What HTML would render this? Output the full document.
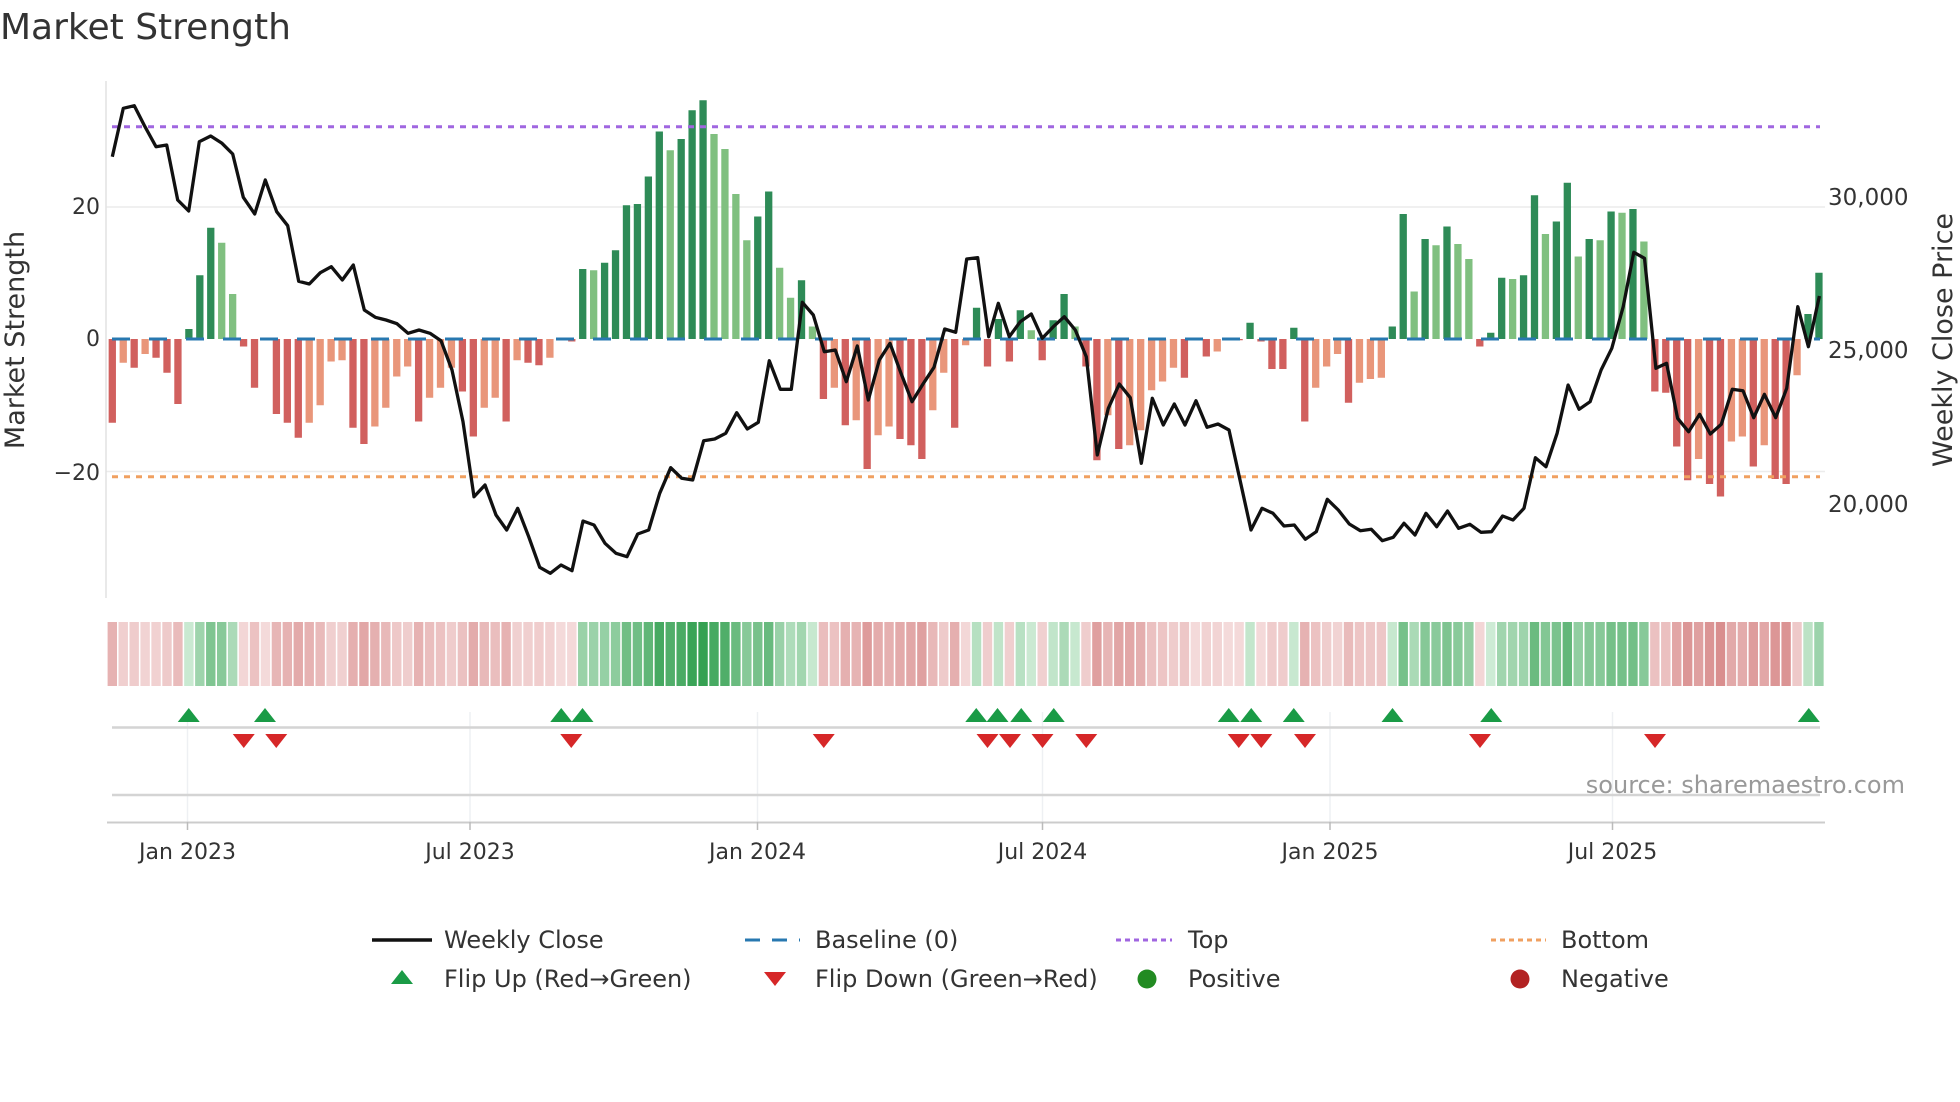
<!DOCTYPE html>
<html><head><meta charset="utf-8"><style>
html,body{margin:0;padding:0;background:#fff;}
svg{display:block;font-family:"DejaVu Sans","Liberation Sans",sans-serif;}
</style></head><body>
<svg id="s" width="1960" height="1102" viewBox="0 0 1960 1102" xmlns="http://www.w3.org/2000/svg">
<rect width="1960" height="1102" fill="#fff"/>
<text x="0" y="39" font-size="36" fill="#333">Market Strength</text>
<line x1="106" y1="207" x2="1825" y2="207" stroke="#ececec" stroke-width="1.5"/>
<line x1="106" y1="471.5" x2="1825" y2="471.5" stroke="#ececec" stroke-width="1.5"/>
<line x1="106" y1="81" x2="106" y2="598" stroke="#e2e2e2" stroke-width="1.5"/>
<g id="bars"></g>
<line x1="112" y1="339" x2="1820" y2="339" stroke="#2878b0" stroke-width="3" stroke-dasharray="18 19"/>
<line x1="112" y1="126.7" x2="1820" y2="126.7" stroke="#a066e0" stroke-width="3" stroke-dasharray="6 6"/>
<line x1="112" y1="476.7" x2="1820" y2="476.7" stroke="#f0a060" stroke-width="3" stroke-dasharray="6 6"/>
<polyline id="pl" fill="none" stroke="#111" stroke-width="3.3" stroke-linejoin="round"/>
<g font-size="22" fill="#333">
<text x="100" y="214" text-anchor="end">20</text>
<text x="100" y="346" text-anchor="end">0</text>
<text x="100" y="480" text-anchor="end">−20</text>
<text transform="translate(24,340) rotate(-90)" text-anchor="middle" font-size="27">Market Strength</text>
<text x="1828" y="205" font-size="23">30,000</text>
<text x="1828" y="358" font-size="23">25,000</text>
<text x="1828" y="512" font-size="23">20,000</text>
<text transform="translate(1952,340) rotate(-90)" text-anchor="middle" font-size="27">Weekly Close Price</text>
</g>
<g id="strip"></g>
<g stroke="#eef0f3" stroke-width="1.5">
<line x1="187.5" y1="712" x2="187.5" y2="822"/><line x1="470" y1="712" x2="470" y2="822"/>
<line x1="757.5" y1="712" x2="757.5" y2="822"/><line x1="1042.5" y1="712" x2="1042.5" y2="822"/>
<line x1="1330" y1="712" x2="1330" y2="822"/><line x1="1612.5" y1="712" x2="1612.5" y2="822"/>
</g>
<line x1="112" y1="727.5" x2="1820" y2="727.5" stroke="#d4d4d4" stroke-width="2.5"/>
<line x1="112" y1="795" x2="1820" y2="795" stroke="#d4d4d4" stroke-width="2.5"/>
<line x1="107" y1="822.5" x2="1825" y2="822.5" stroke="#ccc" stroke-width="2"/>
<g stroke="#bbb" stroke-width="1.5">
<line x1="187.5" y1="822" x2="187.5" y2="830"/><line x1="470" y1="822" x2="470" y2="830"/>
<line x1="757.5" y1="822" x2="757.5" y2="830"/><line x1="1042.5" y1="822" x2="1042.5" y2="830"/>
<line x1="1330" y1="822" x2="1330" y2="830"/><line x1="1612.5" y1="822" x2="1612.5" y2="830"/>
</g>
<g id="mk"></g>
<g font-size="22" fill="#333" text-anchor="middle">
<text x="187.5" y="859">Jan 2023</text><text x="470" y="859">Jul 2023</text>
<text x="757.5" y="859">Jan 2024</text><text x="1042.5" y="859">Jul 2024</text>
<text x="1330" y="859">Jan 2025</text><text x="1612.5" y="859">Jul 2025</text>
</g>
<text x="1905" y="793" font-size="24" fill="#999" text-anchor="end">source: sharemaestro.com</text>
<g font-size="24" fill="#333">
<line x1="372" y1="940" x2="432" y2="940" stroke="#111" stroke-width="3.5"/>
<text x="444" y="948">Weekly Close</text>
<line x1="745" y1="940" x2="800" y2="940" stroke="#2878b0" stroke-width="3" stroke-dasharray="15 12"/>
<text x="815" y="948">Baseline (0)</text>
<line x1="1116" y1="940" x2="1172" y2="940" stroke="#a066e0" stroke-width="3" stroke-dasharray="5 4"/>
<text x="1188" y="948">Top</text>
<line x1="1491" y1="940" x2="1546" y2="940" stroke="#f0a060" stroke-width="3" stroke-dasharray="5 4"/>
<text x="1561" y="948">Bottom</text>
<polygon points="391,984 413,984 402,970" fill="#1a9b46"/>
<text x="444" y="987">Flip Up (Red→Green)</text>
<polygon points="764,972 786,972 775,986" fill="#d62728"/>
<text x="815" y="987">Flip Down (Green→Red)</text>
<circle cx="1147" cy="979" r="9.5" fill="#228b22"/>
<text x="1188" y="987">Positive</text>
<circle cx="1520" cy="979" r="9.5" fill="#b22222"/>
<text x="1561" y="987">Negative</text>
</g>
</svg>
<script>
(function(){
var NS="http://www.w3.org/2000/svg";
function el(t,a,p){var e=document.createElementNS(NS,t);for(var k in a)e.setAttribute(k,a[k]);p.appendChild(e);return e;}
var D="-67d,-19l,-23d,-12l,-15d,-27d,-52d,8d,51d,89d,77l,36l,-6d,-39d,0l,-60d,-67d,-79d,-67l,-53l,-18l,-17l,-71d,-84d,-70l,-55l,-30l,-22l,-66d,-47l,-39l,-23l,-42d,-78d,-55l,-47l,-66d,-17l,-19d,-21d,-15l,"+
"0l,-2d,56d,55l,61d,71d,107d,108d,130d,166d,151l,160d,183d,191d,164l,152l,116l,79l,98d,118d,57l,33l,47d,10l,-48d,-39l,-69d,-65l,-104d,-77l,-70l,-80d,-85d,-96d,-57l,-27l,-71d,-5l,25d,-22d,16d,"+
"-18d,23d,7l,-17d,15d,36d,10l,-22d,-97d,-61l,-88d,-85l,-73l,-41l,-34l,-23l,-31d,0l,-14d,-10l,0l,-1d,13d,-2d,-24d,-24d,9d,-66d,-39l,-22l,-12l,-51d,-35l,-32l,-31l,10d,100d,38l,80d,75l,"+
"90d,76l,64l,-6d,5d,49d,48l,51d,115d,84l,94d,125d,66l,80d,79l,102d,101l,104d,78l,-42d,-43d,-86d,-113d,-96l,-116d,-126d,-82l,-78l,-102d,-85l,-112d,-116d,-29l,20d,53d";
var arr=D.split(",");var bars=document.getElementById("bars"),strip=document.getElementById("strip");
function mix(a,b,t){return "rgb("+[0,1,2].map(function(i){return Math.round(a[i]+(b[i]-a[i])*t)}).join(",")+")";}
var last=1;
arr.forEach(function(s,i){
 var v=parseFloat(s),dark=s.slice(-1)=="d",x=112.3+i*10.94,h=Math.abs(v)*1.25;
 var c;
 if(v>=0)c=dark?"#2e8b57":"#80c080";else c=dark?"#d1605e":"#e9967a";
 if(h>0.5)el("rect",{x:x-3.65,y:v>=0?339-h:339,width:7.3,height:h,fill:c},bars);
 var col;
 if(v>0||(v==0&&last>0)){var t=Math.min(v/191,1);col=mix([214,239,220],[53,161,82],Math.pow(t,0.8));last=1;}
 else{var t=Math.min(-v/126,1);col=mix([244,218,218],[217,142,142],t);last=-1;}
 el("rect",{x:x-4.7,y:622,width:9.4,height:64,fill:col},strip);
});
var pts=[];
function add(list,x0,sx){for(var i=0;i<list.length;i+=2)pts.push((x0+list[i]/sx).toFixed(1)+","+(80+list[i+1]/3).toFixed(1));}
add([37,230,70,85,103,77,135,140,168,200,200,195,233,360,266,393,298,185,332,168,366,190,398,222,430,352,464,402,496,300,530,395,563,437,596,604,628,612,661,578,694,560,727,600,760,555,793,690,826,712,858,720,891,731,924,760,957,750,990,760,1023,782,1056,870,1089,1025,1122,1250,1155,1215,1188,1305,1220,1350,1253,1285,1286,1370,1319,1462,1351,1480],100,3);
add([63,1455,96,1472,129,1323,162,1335,195,1390,228,1420,261,1430,293,1362,326,1350,359,1240,392,1163,425,1195,458,1200,491,1082,524,1077,557,1060,590,998,622,1047,655,1027,688,842,721,928,754,928,787,667,820,705,853,815,886,810,919,905,952,798,985,960,1018,840,1050,790,1083,880,1116,965,1149,912,1182,862,1214,747,1247,757,1280,537,1313,533,1346,770,1375,670],540,3);
add([88,770,121,725,154,702,187,775,220,740,253,710,286,750,319,830,352,1125,385,985,418,912,451,953,484,1150,517,955,550,1035,583,972,615,1035,648,962,681,1042,714,1032,747,1050,780,1200,813,1350,846,1285,879,1300,912,1338,943,1335,976,1378,1009,1355,1042,1258,1075,1290,1108,1332,1141,1352,1174,1348,1207,1382,1240,1372,1272,1330,1305,1365,1338,1300,1370,1340],980,3);
add([80,1293,112,1345,145,1333,177,1357,208,1355,240,1308,270,1320,302,1285,335,1133,366,1160,398,1060,430,915,462,988,494,965,526,870,557,805,590,680,621,517,652,535,685,865,716,850,748,1015,780,1055,812,1003,843,1062,875,1033,907,928,938,932,969,1013,1000,943,1033,1013,1065,925,1097,680,1128,800,1160,648],1420,2.904);
document.getElementById("pl").setAttribute("points",pts.join(" "));
var mk=document.getElementById("mk");
[151,212,449,466,781,798,817,843,983,1001,1035,1114,1193,1447].forEach(function(d){var x=d*1.25;el("polygon",{points:(x-11)+",722 "+(x+11)+",722 "+x+",708",fill:"#1a9b46"},mk);});
[195,221,457,659,790,808,834,869,991,1009,1044,1184,1324].forEach(function(d){var x=d*1.25;el("polygon",{points:(x-11)+",734 "+(x+11)+",734 "+x+",748",fill:"#d62728"},mk);});
})();
</script>
</body></html>
